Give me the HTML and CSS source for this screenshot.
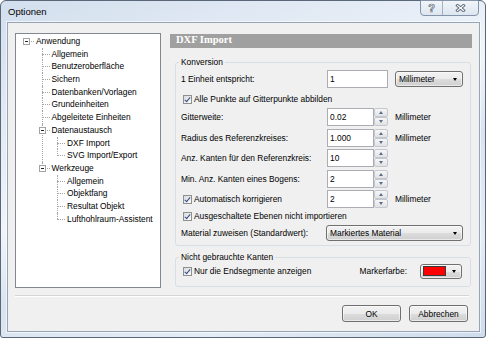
FILE: index.html
```html
<!DOCTYPE html>
<html lang="de">
<head>
    <meta charset="UTF-8">
    <title>Optionen</title>
    <link rel="stylesheet" href="styles.css">
</head>
<body>
    <div class="window">
        <div class="titlebar">
            <span class="title">Optionen</span>
            <div class="caption-buttons">
                <span class="cap-btn help">?</span>
                <span class="cap-btn close">
                    <svg width="11" height="8" viewBox="0 0 11 8">
                        <path d="M2.5 1.5 L8.5 6.5 M8.5 1.5 L2.5 6.5" stroke="#5f6b7b" stroke-width="3" stroke-linecap="square" fill="none"/>
                        <path d="M2.5 1.5 L8.5 6.5 M8.5 1.5 L2.5 6.5" stroke="#fff" stroke-width="1.2" stroke-linecap="square" fill="none"/>
                    </svg>
                </span>
            </div>
        </div>

        <div class="client">
            <div class="main">
                <div class="tree-box">
                    <ul class="tree">
                        <li>
                            <span class="node"><i class="box"></i>Anwendung</span>
                            <ul>
                                <li><span class="node">Allgemein</span></li>
                                <li><span class="node">Benutzeroberfläche</span></li>
                                <li><span class="node">Sichern</span></li>
                                <li><span class="node">Datenbanken/Vorlagen</span></li>
                                <li><span class="node">Grundeinheiten</span></li>
                                <li><span class="node">Abgeleitete Einheiten</span></li>
                                <li>
                                    <span class="node"><i class="box"></i>Datenaustausch</span>
                                    <ul>
                                        <li><span class="node selected">DXF Import</span></li>
                                        <li><span class="node">SVG Import/Export</span></li>
                                    </ul>
                                </li>
                                <li>
                                    <span class="node"><i class="box"></i>Werkzeuge</span>
                                    <ul>
                                        <li><span class="node">Allgemein</span></li>
                                        <li><span class="node">Objektfang</span></li>
                                        <li><span class="node">Resultat Objekt</span></li>
                                        <li><span class="node">Lufthohlraum-Assistent</span></li>
                                    </ul>
                                </li>
                            </ul>
                        </li>
                    </ul>
                </div>

                <div class="panel">
                    <div class="panel-header">DXF Import</div>

                    <fieldset class="group group-conv">
                        <legend>Konversion</legend>
                        <div class="row row-field">
                            <span class="label">1 Einheit entspricht:</span>
                            <span class="textbox">1</span>
                            <span class="combo combo-unit">Millimeter<i class="arrow"></i></span>
                        </div>
                        <div class="row row-check first-check">
                            <span class="check"></span>Alle Punkte auf Gitterpunkte abbilden
                        </div>
                        <div class="row row-spin first-spin">
                            <span class="label">Gitterweite:</span>
                            <span class="spin"><span class="spin-text">0.02</span><span class="spin-btns"><span class="up"></span><span class="down"></span></span></span>
                            <span class="unit">Millimeter</span>
                        </div>
                        <div class="row row-spin">
                            <span class="label">Radius des Referenzkreises:</span>
                            <span class="spin"><span class="spin-text">1.000</span><span class="spin-btns"><span class="up"></span><span class="down"></span></span></span>
                            <span class="unit">Millimeter</span>
                        </div>
                        <div class="row row-spin">
                            <span class="label">Anz. Kanten für den Referenzkreis:</span>
                            <span class="spin"><span class="spin-text">10</span><span class="spin-btns"><span class="up"></span><span class="down"></span></span></span>
                        </div>
                        <div class="row row-spin">
                            <span class="label">Min. Anz. Kanten eines Bogens:</span>
                            <span class="spin"><span class="spin-text">2</span><span class="spin-btns"><span class="up"></span><span class="down"></span></span></span>
                        </div>
                        <div class="row row-spin">
                            <span class="label"><span class="check"></span>Automatisch korrigieren</span>
                            <span class="spin"><span class="spin-text">2</span><span class="spin-btns"><span class="up"></span><span class="down"></span></span></span>
                            <span class="unit">Millimeter</span>
                        </div>
                        <div class="row row-check">
                            <span class="check"></span>Ausgeschaltete Ebenen nicht importieren
                        </div>
                        <div class="row row-combo">
                            <span class="label">Material zuweisen (Standardwert):</span>
                            <span class="combo combo-material">Markiertes Material<i class="arrow"></i></span>
                        </div>
                    </fieldset>

                    <fieldset class="group group-edges">
                        <legend>Nicht gebrauchte Kanten</legend>
                        <div class="row row-check">
                            <span class="check"></span>Nur die Endsegmente anzeigen
                            <span class="spacer"></span>
                            <span>Markerfarbe:</span>
                            <span class="color-btn"><span class="swatch"></span><i class="arrow"></i></span>
                        </div>
                    </fieldset>
                </div>
            </div>

            <div class="separator"></div>

            <div class="buttons">
                <span class="btn">OK</span>
                <span class="btn">Abbrechen</span>
            </div>
        </div>
    </div>
</body>
</html>
```

FILE: styles.css
```css
* {
    box-sizing: border-box;
}
body {
    margin: 0;
    font-family: "Liberation Sans", Arial, sans-serif;
    font-size: 8.4px;
    color: #000;
    background: #fff;
}
.window {
    width: 486px;
    height: 338px;
    border: 1px solid #5a6778;
    border-radius: 6px 6px 3px 3px;
    padding: 0 5px 5px 6px;
    display: flex;
    flex-direction: column;
    background: linear-gradient(160deg, #d3dfee 0%, #e6edf6 30%, #f1f5fa 45%, #d9e4f0 60%, #e4ecf5 80%, #cfdcec 100%);
}
.titlebar {
    height: 21px;
    display: flex;
    justify-content: space-between;
    align-items: flex-start;
}
.title {
    font-size: 9.5px;
    line-height: 22px;
    margin-left: 1px;
}
.caption-buttons {
    display: flex;
    width: 59px;
    height: 16px;
    margin-top: -1px;
    margin-right: 1px;
    border: 1px solid #8393a8;
    border-radius: 0 0 4px 4px;
    overflow: hidden;
    background: linear-gradient(#f1f5fa, #dde6f0);
}
.cap-btn {
    display: flex;
    align-items: center;
    justify-content: center;
}
.help {
    width: 22px;
    border-right: 1px solid #a3b0c0;
    font: bold 11px "Liberation Sans", sans-serif;
    color: #fff;
    -webkit-text-stroke: 0.7px #5f6b7b;
}
.close {
    flex: 1;
}

/* client area */
.client {
    flex: 1;
    background: #f0f0f0;
    border: 1px solid #96a4b5;
    box-shadow: 0 0 0 1px rgba(255, 255, 255, 0.6);
    display: flex;
    flex-direction: column;
}
.main {
    display: flex;
    padding: 10px 0 0 7px;
}

/* tree */
.tree-box {
    width: 146px;
    height: 255px;
    border: 1px solid #828790;
    background: #fff;
    padding-top: 1px;
}
.tree, .tree ul {
    list-style: none;
    margin: 0;
    padding: 0;
}
.tree ul {
    margin-left: 15.5px;
}
.tree li {
    position: relative;
}
.node {
    display: block;
    position: relative;
    height: 12.7px;
    line-height: 12.7px;
    padding-left: 20px;
    white-space: nowrap;
}
.node::before {
    content: "";
    position: absolute;
    left: 10px;
    top: 6px;
    width: 8px;
    border-top: 1px dotted #a5a5a5;
}
.tree ul > li::after {
    content: "";
    position: absolute;
    left: 10px;
    top: 0;
    bottom: 0;
    border-left: 1px dotted #a5a5a5;
}
.tree ul > li:last-child::after {
    bottom: auto;
    height: 6.5px;
}
.box {
    position: absolute;
    z-index: 1;
    left: 7px;
    top: 3px;
    width: 7px;
    height: 7px;
    border: 1px solid #a3a3a3;
    background: #fff;
}
.box::after {
    content: "";
    position: absolute;
    left: 1px;
    top: 2px;
    width: 3px;
    height: 1px;
    background: #222;
}

/* right panel */
.panel {
    width: 302px;
    margin-left: 9px;
    margin-top: 1px;
}
.panel-header {
    height: 14px;
    line-height: 14px;
    padding-left: 6px;
    background: #a0a0a0;
    color: #fff;
    font: bold 10.5px "Liberation Serif", serif;
}
.group {
    margin: 0 1px 0 5px;
    border: 1px solid #d5dfe5;
    border-radius: 3px;
    padding: 2px 7px 4px 5px;
    min-width: 0;
}
.group legend {
    padding: 0 2px;
    margin-left: -2px;
    line-height: 11px;
}
.group-conv {
    margin-top: 9px;
}
.group-edges {
    margin-top: 6px;
    padding: 0 8px 7px 5px;
}
.row {
    display: flex;
    align-items: center;
    white-space: nowrap;
}
.row-field {
    height: 18px;
}
.row-check {
    height: 16px;
}
.first-check {
    margin-top: 3px;
}
.row-spin {
    height: 18px;
    margin-top: 2.6px;
}
.row-spin.first-spin {
    margin-top: 1px;
}
.row-combo {
    height: 16px;
    margin-top: 1px;
}
.label {
    width: 146px;
    flex: none;
    display: flex;
    align-items: center;
}
.spacer {
    flex: 1;
}
.unit {
    margin-left: 7px;
}

/* controls */
.check {
    width: 9px;
    height: 9px;
    margin: 0 2px 0 2px;
    border: 1px solid #8e8f8f;
    background: linear-gradient(135deg, #dcdcdc, #fbfbfb) ;
    position: relative;
}
.check::after {
    content: "";
    position: absolute;
    left: 2px;
    top: 0px;
    width: 2px;
    height: 5px;
    border: solid #2d4a8a;
    border-width: 0 1.5px 1.5px 0;
    transform: rotate(40deg);
}
.textbox {
    width: 61px;
    height: 18px;
    line-height: 16px;
    padding-left: 2px;
    border: 1px solid #abadb3;
    background: #fff;
}
.spin {
    display: flex;
    width: 61px;
    height: 18px;
}
.spin-text {
    flex: 1;
    line-height: 16px;
    padding-left: 2px;
    border: 1px solid #abadb3;
    background: #fff;
}
.spin-btns {
    width: 14px;
    display: flex;
    flex-direction: column;
}
.spin-btns span {
    flex: 1;
    display: flex;
    align-items: center;
    justify-content: center;
    border: 1px solid #c3c8d0;
    border-radius: 2px;
    background: linear-gradient(#f7f7f7, #e2e2e2);
}
.spin-btns .up::after,
.spin-btns .down::after {
    content: "";
    border-left: 2.5px solid transparent;
    border-right: 2.5px solid transparent;
}
.spin-btns .up::after {
    border-bottom: 3px solid #5a6d8f;
}
.spin-btns .down::after {
    border-top: 3px solid #5a6d8f;
}
.combo, .btn, .color-btn {
    border: 1px solid #707070;
    border-radius: 3px;
    background: linear-gradient(#f2f2f2 0%, #ebebeb 50%, #dddddd 51%, #cfcfcf 100%);
    box-shadow: inset 0 0 0 1px rgba(255, 255, 255, 0.55);
}
.combo {
    height: 16px;
    display: flex;
    align-items: center;
    justify-content: space-between;
    padding: 0 5px 0 3px;
}
.combo-unit {
    width: 68px;
    margin-left: 7px;
}
.combo-material {
    width: 138px;
    margin-left: -1px;
}
.arrow {
    border-left: 2.5px solid transparent;
    border-right: 2.5px solid transparent;
    border-top: 3px solid #000;
}
.color-btn {
    width: 42px;
    height: 15px;
    margin-left: 13px;
    display: flex;
    align-items: center;
    padding-left: 2px;
}
.swatch {
    width: 23px;
    height: 10px;
    background: #ff0000;
    border: 1px solid #3a3a3a;
    margin-right: 6px;
}

/* footer */
.separator {
    height: 2px;
    margin: 7px 10px 0 7px;
    border-top: 1px solid #d5d5d5;
    border-bottom: 1px solid #fff;
}
.buttons {
    display: flex;
    justify-content: flex-end;
    gap: 8px;
    padding: 8px 11px 0 0;
}
.btn {
    width: 59px;
    height: 17px;
    display: flex;
    align-items: center;
    justify-content: center;
}
```
